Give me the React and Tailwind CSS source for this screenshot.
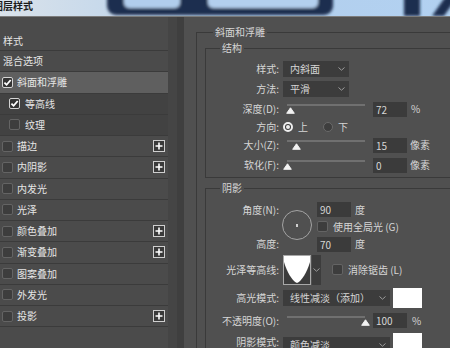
import clsx from 'clsx'

const items = [
  { label: '混合选项' },
  { label: '斜面和浮雕', check: true, checked: true, selected: true },
  { label: '等高线', check: true, checked: true, sub: true },
  { label: '纹理', check: true, sub: true },
  { label: '描边', check: true, plus: true },
  { label: '内阴影', check: true, plus: true },
  { label: '内发光', check: true },
  { label: '光泽', check: true },
  { label: '颜色叠加', check: true, plus: true },
  { label: '渐变叠加', check: true, plus: true },
  { label: '图案叠加', check: true },
  { label: '外发光', check: true },
  { label: '投影', check: true, plus: true },
]

function CheckBox({ checked }) {
  return (
    <span
      className={clsx(
        'flex h-[11px] w-[11px] shrink-0 items-center justify-center rounded-[2px] border',
        checked ? 'border-[#d4d4d4] bg-[#343434]' : 'border-[#646464] bg-[#3d3d3d]',
      )}
    >
      {checked && (
        <svg width="9" height="9" viewBox="0 0 9 9">
          <path d="M1.4 4.6 L3.6 6.8 L7.7 2" fill="none" stroke="#fff" strokeWidth="1.8" />
        </svg>
      )}
    </span>
  )
}

function PlusBox() {
  return (
    <span className="ml-auto mr-[3px] flex h-[12px] w-[12px] items-center justify-center border border-[#cfcfcf] bg-[#3a3a3a]">
      <svg width="8" height="8" viewBox="0 0 8 8">
        <path d="M4 0.5V7.5M0.5 4H7.5" stroke="#fff" strokeWidth="1.6" />
      </svg>
    </span>
  )
}

function Chevron() {
  return (
    <svg width="7" height="4" viewBox="0 0 7 4">
      <path d="M0.5 0.5L3.5 3.2L6.5 0.5" fill="none" stroke="#9c9c9c" strokeWidth="1" />
    </svg>
  )
}

function Select({ width, children }) {
  return (
    <div className={clsx('flex h-[16px] items-center justify-between bg-[#3c3c3c] pl-[7px] pr-[4px]', width)}>
      <span className="leading-[16px]">{children}</span>
      <Chevron />
    </div>
  )
}

// at: thumb centre, px from track start
function Slider({ at }) {
  return (
    <div className="flex h-[10px] w-[84px] shrink-0 flex-col pl-[4px] pr-[2px]">
      <div className="h-[2px] bg-[#707070]" />
      <svg className="mt-[1px] shrink-0" style={{ marginLeft: at - 4.5 }} width="9" height="7" viewBox="0 0 9 7">
        <path d="M4.5 0.8 L8.3 6.3 H0.7 Z" fill="#f2f2f2" stroke="#f2f2f2" strokeLinejoin="round" />
      </svg>
    </div>
  )
}

function Field({ value, className }) {
  return (
    <div className={clsx('h-[15px] w-[34px] shrink-0 bg-[#3b3b3b] pl-[3px] leading-[15px]', className)}>{value}</div>
  )
}

function Radio({ on }) {
  return on ? (
    <span className="flex h-[10px] w-[10px] shrink-0 items-center justify-center rounded-full border-[2px] border-[#eeeeee] bg-[#3a3a3a]">
      <span className="h-[4px] w-[4px] rounded-full bg-[#eeeeee]" />
    </span>
  ) : (
    <span className="block h-[10px] w-[10px] shrink-0 rounded-full border border-[#6a6a6a] bg-[#3e3e3e]" />
  )
}

function Label({ children }) {
  return <div className="w-[73px] shrink-0 text-right leading-[14px]">{children}</div>
}

function TitleBar() {
  return (
    <div className="relative h-[16px] overflow-hidden bg-gradient-to-r from-[#d9e2ea] via-[#b3cfec] to-[#b2d1f1]">
      <svg className="absolute left-0 top-0" width="450" height="16" viewBox="0 0 450 16">
        <defs>
          <filter id="blur" x="-10%" y="-50%" width="120%" height="200%">
            <feGaussianBlur stdDeviation="1.6" />
          </filter>
        </defs>
        <g filter="url(#blur)">
          <rect x="107" y="-20" width="226" height="35" rx="9" fill="#1f2f50" />
          <rect x="124" y="-20" width="56" height="28" rx="5" fill="#b1cdec" />
          <rect x="208" y="-20" width="110" height="28" rx="5" fill="#b3cfee" />
          <rect x="404" y="-6" width="16" height="22" fill="#1f2f50" />
          <path d="M432 16 L446 -4 L458 -4 L444 16 Z" fill="#1f2f50" />
        </g>
      </svg>
      <span className="relative ml-[-7px] block text-[10px] leading-[12px] font-bold text-[#1b1b1b]">图层样式</span>
    </div>
  )
}

function StyleList() {
  return (
    <div className="w-[168px] shrink-0 bg-[#4b4b4b] text-[#e6e6e6]">
      <div className="h-[34px] border-b border-[#3b3b3b] pl-[3px] pt-[16px] leading-[16px]">样式</div>
      {items.map(item => (
        <div
          key={item.label}
          className={clsx(
            'flex h-[21.25px] items-center border-b border-[#3b3b3b]',
            item.sub ? 'gap-[5px] bg-[#424242] pl-[9px]' : 'gap-[4px] pl-[2px]',
            item.selected && 'bg-[#5f5f5f]',
            !item.check && 'pl-[3px]',
          )}
        >
          {item.check && <CheckBox checked={item.checked} />}
          <span className="leading-[14px]">{item.label}</span>
          {item.plus && <PlusBox />}
        </div>
      ))}
    </div>
  )
}

function Structure() {
  return (
    <fieldset className="ml-[8px] mt-[2px] w-[280px] border border-[#3a3a3a] pb-[2px] pt-[4px]">
      <legend className="ml-[14px] px-[2px] leading-[14px]">结构</legend>
      <div className="flex h-[19px] items-center">
        <Label>样式:</Label>
        <div className="ml-[4px]"><Select width="w-[66px]">内斜面</Select></div>
      </div>
      <div className="flex h-[22px] items-center">
        <Label>方法:</Label>
        <div className="ml-[4px]"><Select width="w-[66px]">平滑</Select></div>
      </div>
      <div className="flex h-[18px] items-center">
        <Label>深度(D):</Label>
        <div className="ml-[4px] flex items-center">
          <Slider at={3} />
          <Field value="72" className="ml-[6px]" />
          <span className="ml-[4px] leading-[14px]">%</span>
        </div>
      </div>
      <div className="flex h-[17px] items-center">
        <Label>方向:</Label>
        <div className="ml-[4px] flex items-center">
          <Radio on />
          <span className="ml-[5px] leading-[14px]">上</span>
          <span className="ml-[15px] flex items-center"><Radio /></span>
          <span className="ml-[5px] leading-[14px]">下</span>
        </div>
      </div>
      <div className="flex h-[20px] items-center">
        <Label>大小(Z):</Label>
        <div className="ml-[4px] flex items-center">
          <Slider at={9} />
          <Field value="15" className="ml-[6px]" />
          <span className="ml-[3px] leading-[14px]">像素</span>
        </div>
      </div>
      <div className="flex h-[20px] items-center">
        <Label>软化(F):</Label>
        <div className="ml-[4px] flex items-center">
          <Slider at={0} />
          <Field value="0" className="ml-[6px]" />
          <span className="ml-[3px] leading-[14px]">像素</span>
        </div>
      </div>
    </fieldset>
  )
}

function Shading() {
  return (
    <fieldset className="ml-[8px] mt-[3px] w-[280px] border border-[#3a3a3a] pt-[6px]">
      <legend className="ml-[14px] px-[2px] leading-[14px]">阴影</legend>
      <div className="grid grid-cols-[73px_30px_1fr] grid-rows-[17px_17px_18px] gap-x-[4px]">
        <div className="flex items-center justify-end leading-[14px]">角度(N):</div>
        <div className="row-span-3">
          <div className="ml-[-1px] mt-[9px] flex h-[30px] w-[30px] items-center justify-center rounded-full border border-[#a3a3a3]">
            <span className="h-[3px] w-[2px] bg-[#cfcfcf]" />
          </div>
        </div>
        <div className="flex items-center">
          <Field value="90" />
          <span className="ml-[4px] leading-[14px]">度</span>
        </div>
        <div />
        <div className="flex items-center gap-[5px]">
          <CheckBox />
          <span className="leading-[14px]">使用全局光 (G)</span>
        </div>
        <div className="flex items-center justify-end leading-[14px]">高度:</div>
        <div className="flex items-center">
          <Field value="70" />
          <span className="ml-[4px] leading-[14px]">度</span>
        </div>
      </div>
      <div className="flex h-[33px] items-center">
        <Label>光泽等高线:</Label>
        <div className="ml-[4px] flex h-[30px]">
          <div className="h-[30px] w-[28px] overflow-hidden border border-[#a8a8a8] bg-[#3c3c3c]">
            <svg width="26" height="28" viewBox="0 0 26 28">
              <path d="M0 0H26V6C23 16 18 25 13 27C8 25 3 16 0 6Z" fill="#fff" />
            </svg>
          </div>
          <div className="ml-[1px] flex w-[9px] items-center justify-center bg-[#3c3c3c]">
            <Chevron />
          </div>
        </div>
        <div className="ml-[11px] flex items-center gap-[5px]">
          <CheckBox />
          <span className="leading-[14px]">消除锯齿 (L)</span>
        </div>
      </div>
      <div className="flex h-[23px] items-center">
        <Label>高光模式:</Label>
        <div className="ml-[4px]"><Select width="w-[107px]">线性减淡（添加）</Select></div>
        <div className="ml-[3px] h-[20px] w-[29px] bg-white" />
      </div>
      <div className="flex h-[23px] items-center">
        <Label>不透明度(O):</Label>
        <div className="ml-[4px] flex items-center">
          <Slider at={78} />
          <Field value="100" className="ml-[6px]" />
          <span className="ml-[5px] leading-[14px]">%</span>
        </div>
      </div>
      <div className="flex h-[24px] items-start">
        <div className="mt-[3px]"><Label>阴影模式:</Label></div>
        <div className="ml-[4px] mt-[5px]"><Select width="w-[107px]">颜色减淡</Select></div>
        <div className="ml-[3px] mt-[1px] h-[20px] w-[29px] bg-white" />
      </div>
    </fieldset>
  )
}

export default function App() {
  return (
    <div className="h-[348px] w-[450px] overflow-hidden bg-[#505050] font-['Noto_Sans_CJK_SC','Noto_Sans',sans-serif] text-[10px] text-[#d6d6d6]">
      <TitleBar />
      <div className="h-[1px] bg-[#7c7c7c]" />
      <div className="flex h-[331px]">
        <StyleList />
        <div className="w-[9px] shrink-0 bg-[#454545]" />
        <div className="w-[7px] shrink-0 bg-[#3f3f3f]" />
        <div className="flex-1 overflow-hidden pl-[12px] pt-[8px]">
          <fieldset className="w-[300px] border border-[#3a3a3a]">
            <legend className="ml-[16px] px-[2px] leading-[14px]">斜面和浮雕</legend>
            <Structure />
            <Shading />
          </fieldset>
        </div>
      </div>
    </div>
  )
}
